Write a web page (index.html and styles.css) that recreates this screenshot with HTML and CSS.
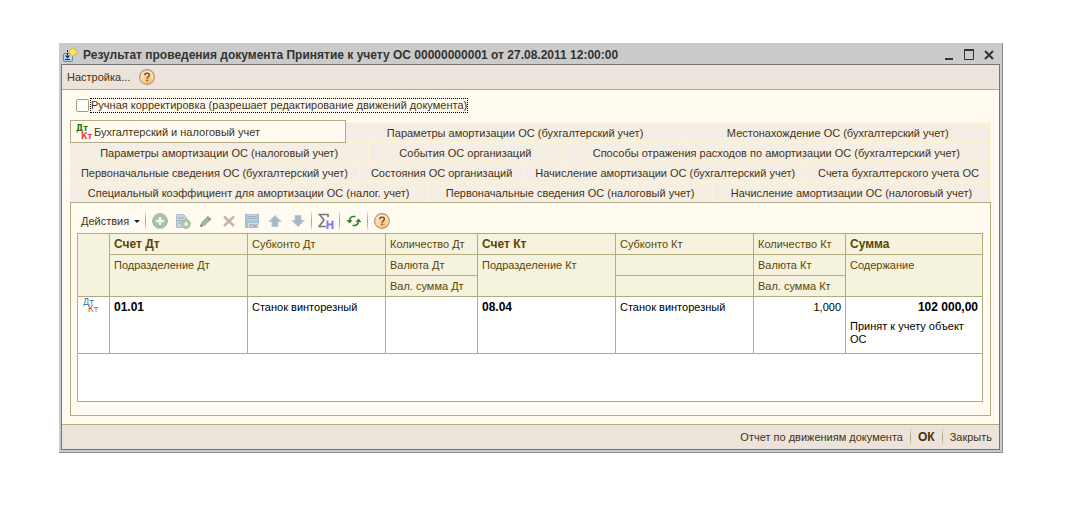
FILE: index.html
```
<!DOCTYPE html>
<html lang="ru">
<head>
    <meta charset="UTF-8">
    <meta name="viewport" content="width=device-width, initial-scale=1.0">
    <title>Результат проведения документа</title>
    <link rel="stylesheet" href="styles.css">
</head>
<body>

    <!-- Общие иконки -->
    <svg class="sprite" aria-hidden="true">
        <defs>
            <radialGradient id="helpFill" cx="0.6" cy="0.75" r="0.75">
                <stop offset="0" stop-color="#ffb95e"/>
                <stop offset="0.5" stop-color="#fbd8a4"/>
                <stop offset="1" stop-color="#f6e8d2"/>
            </radialGradient>
        </defs>
        <symbol id="help" viewBox="0 0 16 16">
            <circle cx="8" cy="8" r="7.4" fill="url(#helpFill)" stroke="#a8927c" stroke-width="1.1"/>
            <path d="M5.700 6.300c0-2.900 4.700-2.900 4.700-.2 0 1.700-2.300 1.800-2.300 3.600" fill="none" stroke="#7a3b12" stroke-width="1.300"/>
            <rect x="7.400" y="10.700" width="1.400" height="1.500" fill="#7a3b12"/>
        </symbol>
    </svg>

    <div class="window">
        <header class="titlebar">
            <svg class="title-icon" viewBox="0 0 16 16" width="16" height="16">
                <rect x="1.500" y="6.500" width="9" height="8" rx="1.500" fill="#b5d7ee" stroke="#5d87a8"/>
                <path d="M5.500 3v6" stroke="#222" stroke-dasharray="2 1"/>
                <path d="M3 8.500h5l-2.500 3z" fill="#222"/>
                <path d="M3 12.500h5" stroke="#222"/>
                <path d="M11 0.500l4.500 4.500-4.500 4.500-4.500-4.500z" fill="#ffe45c" stroke="#e0b030"/>
            </svg>
            <h1>Результат проведения документа Принятие к учету ОС 00000000001 от 27.08.2011 12:00:00</h1>
            <div class="window-buttons">
                <button type="button" aria-label="Свернуть"><svg width="12" height="12"><path d="M2 10h8" stroke="#333" stroke-width="2"/></svg></button>
                <button type="button" aria-label="Развернуть"><svg width="12" height="12"><path d="M1.500 1v9.500h9V1" fill="none" stroke="#333"/><path d="M1 1h10" stroke="#333" stroke-width="2"/></svg></button>
                <button type="button" aria-label="Закрыть окно"><svg width="12" height="12"><path d="M2 2l8 8M10 2l-8 8" stroke="#333" stroke-width="2"/></svg></button>
            </div>
        </header>

        <div class="client">
            <nav class="menubar">
                <button type="button">Настройка...</button>
                <button type="button" aria-label="Справка"><svg width="16" height="16"><use href="#help"/></svg></button>
            </nav>

            <main class="content">
                <div class="manual">
                    <input type="checkbox" id="manual">
                    <label for="manual">Ручная корректировка (разрешает редактирование движений документа)</label>
                </div>

                <!-- Закладки регистров -->
                <div class="tabs" role="tablist">
                    <div class="tab-row">
                        <button type="button" class="tab active" role="tab" aria-selected="true">
                            <svg class="dtkt" width="16" height="16"><text x="0" y="7" fill="#2c7a10">Дт</text><text x="5" y="15" fill="#f04040">Кт</text></svg>
                            Бухгалтерский и налоговый учет
                        </button>
                        <button type="button" class="tab" role="tab">Параметры амортизации ОС (бухгалтерский учет)</button>
                        <button type="button" class="tab" role="tab">Местонахождение ОС (бухгалтерский учет)</button>
                    </div>
                    <div class="tab-row">
                        <button type="button" class="tab" role="tab">Параметры амортизации ОС (налоговый учет)</button>
                        <button type="button" class="tab" role="tab">События ОС организаций</button>
                        <button type="button" class="tab" role="tab">Способы отражения расходов по амортизации ОС (бухгалтерский учет)</button>
                    </div>
                    <div class="tab-row">
                        <button type="button" class="tab" role="tab">Первоначальные сведения ОС (бухгалтерский учет)</button>
                        <button type="button" class="tab" role="tab">Состояния ОС организаций</button>
                        <button type="button" class="tab" role="tab">Начисление амортизации ОС (бухгалтерский учет)</button>
                        <button type="button" class="tab" role="tab">Счета бухгалтерского учета ОС</button>
                    </div>
                    <div class="tab-row">
                        <button type="button" class="tab" role="tab">Специальный коэффициент для амортизации ОС (налог. учет)</button>
                        <button type="button" class="tab" role="tab">Первоначальные сведения ОС (налоговый учет)</button>
                        <button type="button" class="tab" role="tab">Начисление амортизации ОС (налоговый учет)</button>
                    </div>
                </div>

                <section class="panel">
                    <div class="toolbar">
                        <button type="button" class="actions">Действия <span class="arrow"></span></button>
                        <span class="sep"></span>
                        <div class="tools">
                            <button type="button" aria-label="Добавить" disabled><svg width="16" height="16"><circle cx="8" cy="8" r="7.500" fill="#a8c0a4" stroke="#b5b9a8"/><path d="M8 4v8M4 8h8" stroke="#f3f5e8" stroke-width="2.500"/></svg></button>
                            <button type="button" aria-label="Скопировать" disabled><svg width="16" height="16"><path d="M1.500 1.500h7l3 3v10h-10z" fill="#c7d5dc" stroke="#a9bcc8"/><path d="M3 5h6M3 7.500h6M3 10h4" stroke="#98adba"/><circle cx="11" cy="11" r="4.500" fill="#a8c0a4" stroke="#b5c4ac"/><path d="M11 8.500v5M8.500 11h5" stroke="#f3f5e8" stroke-width="1.500"/></svg></button>
                            <button type="button" aria-label="Изменить" disabled><svg width="16" height="16"><path d="M2 14l1.500-5 6.500-6 3.500 3-6.500 6.500z" fill="#a0b79c"/><path d="M9 4l3.500 3" stroke="#88958a" stroke-width="1.500"/><path d="M2 14l1-3 2 2z" fill="#6f7c70"/></svg></button>
                            <button type="button" aria-label="Удалить" disabled><svg width="16" height="16"><path d="M3 3.500l10 9.500M13 3.500l-10 9.500" stroke="#cbb3ae" stroke-width="2.500"/></svg></button>
                            <button type="button" aria-label="Записать" disabled><svg width="16" height="16"><path d="M1 1h14v14H2l-1-1z" fill="#a8bfce"/><path d="M3.500 1.500h9v6h-9z" fill="#c3d3dc"/><path d="M4 3.500h8M4 5.500h8" stroke="#98afbe"/><path d="M4 10h11v5H4z" fill="#d7dfe0"/><text class="ok" x="5" y="15">ОК</text></svg></button>
                            <button type="button" aria-label="Вверх" disabled><svg width="16" height="16"><path d="M8 2.500l6 6h-3v5H5v-5H2z" fill="#a5b9c4" stroke="#bac8ce"/></svg></button>
                            <button type="button" aria-label="Вниз" disabled><svg width="16" height="16"><path d="M8 13.500l6-6h-3v-5H5v5H2z" fill="#a5b9c4" stroke="#bac8ce"/></svg></button>
                        </div>
                        <span class="sep"></span>
                        <button type="button" aria-label="Итоги"><svg width="16" height="16"><path d="M10 4V1.500H1.500L6 7l-5 6.500h7" fill="none" stroke="#777" stroke-width="1.600"/><path d="M9.500 7.500V16M14.500 7.500V16M9 11.500h6" fill="none" stroke="#7d7df5" stroke-width="2"/></svg></button>
                        <span class="sep"></span>
                        <button type="button" aria-label="Обновить"><svg width="16" height="16"><path d="M3.500 8a4.500 4.500 0 0 1 4-4.500h2M12.500 8a4.500 4.500 0 0 1-4 4.500h-2" fill="none" stroke="#25852a" stroke-width="1.600"/><path d="M0.500 7h6l-3 3.500zM9.500 9h6l-3-3.500z" fill="#25852a"/></svg></button>
                        <span class="sep"></span>
                        <button type="button" aria-label="Справка"><svg width="16" height="16"><use href="#help"/></svg></button>
                    </div>

                    <div class="grid">
                        <table>
                            <colgroup>
                                <col class="col-icon"><col class="col-wide"><col class="col-wide"><col class="col-narrow">
                                <col class="col-wide"><col class="col-wide"><col class="col-narrow"><col class="col-sum">
                            </colgroup>
                            <thead>
                                <tr>
                                    <th rowspan="3"></th>
                                    <th class="strong">Счет Дт</th>
                                    <th>Субконто Дт</th>
                                    <th>Количество Дт</th>
                                    <th class="strong">Счет Кт</th>
                                    <th>Субконто Кт</th>
                                    <th>Количество Кт</th>
                                    <th class="strong">Сумма</th>
                                </tr>
                                <tr>
                                    <th rowspan="2">Подразделение Дт</th>
                                    <th></th>
                                    <th>Валюта Дт</th>
                                    <th rowspan="2">Подразделение Кт</th>
                                    <th></th>
                                    <th>Валюта Кт</th>
                                    <th rowspan="2">Содержание</th>
                                </tr>
                                <tr>
                                    <th></th>
                                    <th>Вал. сумма Дт</th>
                                    <th></th>
                                    <th>Вал. сумма Кт</th>
                                </tr>
                            </thead>
                            <tbody>
                                <tr>
                                    <td><svg class="dtkt thin" width="16" height="16"><text x="1" y="8" fill="#2a6ca0">Дт</text><text x="6" y="15" fill="#d03828">Кт</text></svg></td>
                                    <td class="strong">01.01</td>
                                    <td>Станок винторезный</td>
                                    <td></td>
                                    <td class="strong">08.04</td>
                                    <td>Станок винторезный</td>
                                    <td class="num">1,000</td>
                                    <td>
                                        <div class="strong num">102 000,00</div>
                                        <div class="note">Принят к учету объект ОС</div>
                                    </td>
                                </tr>
                            </tbody>
                        </table>
                    </div>
                </section>
            </main>

            <footer class="footer">
                <button type="button">Отчет по движениям документа</button>
                <span class="sep"></span>
                <button type="button" class="strong">ОК</button>
                <span class="sep"></span>
                <button type="button">Закрыть</button>
            </footer>
        </div>
    </div>

</body>
</html>
```
FILE: styles.css
```
* {
    box-sizing: border-box;
}

body {
    margin: 0;
    padding: 43px 83px 43px 59px;
    background-color: #ffffff;
    font-family: "Liberation Sans", Arial, sans-serif;
    font-size: 11px;
    color: #443311;
}

button {
    padding: 0;
    border: none;
    background: none;
    font: inherit;
    color: inherit;
    white-space: nowrap;
}

svg {
    display: block;
}

.sprite {
    position: absolute;
    width: 0;
    height: 0;
}

.window {
    padding: 0 2px 2px;
    background-color: #cbcbcb;
    border-right: 1px solid #8c8c8c;
    border-bottom: 1px solid #8c8c8c;
}

/* Заголовок окна */
.titlebar {
    display: flex;
    align-items: center;
    height: 21px;
    padding: 2px 5px 0 1px;
}

.titlebar h1 {
    flex: 1;
    margin: 0 0 0 5px;
    font-size: 12px;
    line-height: 18px;
    color: #333333;
    white-space: nowrap;
}

.window-buttons {
    display: flex;
    gap: 8px;
}

.client {
    border: 1px solid #747474;
    background-color: #fffbf0;
}

.menubar {
    display: flex;
    align-items: center;
    gap: 9px;
    height: 25px;
    padding: 0 5px;
    background-color: #ece4da;
    border-bottom: 1px solid #b3ac82;
}

.content {
    padding: 8px;
}

.manual {
    display: flex;
    align-items: center;
    gap: 1px;
    height: 15px;
    margin: 0 6px 7px;
}

.manual input {
    appearance: none;
    width: 13px;
    height: 13px;
    margin: 0;
    background-color: #ffffff;
    border: 1px solid #a59d77;
    border-radius: 2px;
}

.manual label {
    border: 1px dotted #000000;
    line-height: 13px;
}

/* Закладки */
.tab-row {
    display: flex;
    height: 20px;
}

.tab-row:first-child {
    height: 22px;
    align-items: flex-end;
}

.tab {
    flex: 1 1 auto;
    height: 20px;
    padding-top: 1px;
    background-color: #f5eee5;
    border: solid #fcf4d2;
    border-width: 1px 1px 0 0;
    line-height: 18px;
}

.tab.active {
    display: flex;
    align-items: center;
    gap: 2px;
    height: 23px;
    margin-bottom: -1px;
    padding: 0 2px 0 5px;
    background-color: #fffbf0;
    border: 1px solid #b3ac82;
    position: relative;
}

.dtkt {
    overflow: visible;
    font-family: "DejaVu Sans", sans-serif;
    font-size: 8px;
    font-weight: bold;
}

.dtkt.thin {
    font-weight: normal;
}

.panel {
    padding: 8px 7px 13px 6px;
    border: 1px solid #b3ac82;
}

.toolbar {
    display: flex;
    align-items: center;
    height: 20px;
    margin-bottom: 2px;
    padding-left: 4px;
}

.actions {
    display: flex;
    align-items: center;
    gap: 5px;
}

.arrow {
    border: 3px solid transparent;
    border-top-color: #222222;
    border-bottom: none;
}

.sep {
    width: 1px;
    height: 18px;
    margin: 0 6px 0 5px;
    background: linear-gradient(#e6e0c8, #aaa37c, #e6e0c8);
}

.tools {
    display: flex;
    gap: 7px;
}

.ok {
    font-size: 6px;
    font-weight: bold;
    fill: #88a0b0;
}

/* Таблица проводок */
.grid {
    min-height: 169px;
    background-color: #ffffff;
    border: 1px solid #b3ac82;
}

table {
    width: 100%;
    table-layout: fixed;
    border-spacing: 0;
}

.col-icon {
    width: 32px;
}

.col-wide {
    width: 138px;
}

.col-narrow {
    width: 92px;
}

.col-sum {
    width: 136px;
}

th, td {
    padding: 0 4px;
    border: solid #b3ac82;
    border-width: 0 1px 1px 0;
    line-height: 20px;
    text-align: left;
    vertical-align: top;
    white-space: nowrap;
}

th:last-child[rowspan], tr:first-child > :last-child {
    border-right: none;
}

th {
    height: 21px;
    background-color: #f5f2de;
    font-weight: normal;
    color: #5c4608;
}

td {
    height: 57px;
    color: #000000;
}

.strong {
    font-size: 12px;
    font-weight: bold;
}

.num {
    text-align: right;
}

.note {
    margin-top: 3px;
    line-height: 13px;
    white-space: normal;
}

.footer {
    display: flex;
    align-items: center;
    justify-content: flex-end;
    height: 25px;
    padding-right: 7px;
    background-color: #ece4da;
    border-top: 1px solid #b3ac82;
}

.footer .sep {
    margin: 0 7px;
}
```
